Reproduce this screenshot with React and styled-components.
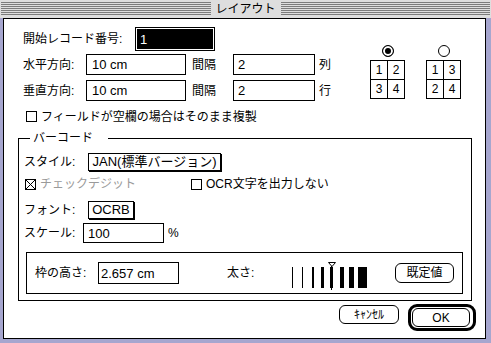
import React from "react";
import styled, { createGlobalStyle } from "styled-components";

const GlobalStyle = createGlobalStyle`
  html, body { margin: 0; padding: 0; background: #fff; }
  body {
    font-family: "Liberation Sans", "Noto Sans CJK JP", sans-serif;
    font-size: 12px;
    color: #000;
  }
  * { box-sizing: border-box; }
`;

const Window = styled.div`
    width: 491px;
    height: 343px;
    background: #a6a6cf;
    display: flex;
    flex-direction: column;
`;

const TitleBar = styled.div`
    height: 18px;
    flex: none;
    background: #dedede;
    display: flex;
    align-items: flex-start;
    padding: 2px 1px 0 1px;
`;

const Stripes = styled.div`
    flex: 1;
    height: 13px;
    background: repeating-linear-gradient(to bottom, #7c7c7c 0 1px, #dedede 1px 2px);
`;

const Title = styled.div`
    padding: 0 5px;
    line-height: 14px;
    background: #dedede;
`;

const Body = styled.div`
    flex: 1;
    margin: 0 5px 4px 3px;
    background: #fff;
    border: 1px solid #000;
    display: flex;
    flex-direction: column;
`;

const Top = styled.div`
    display: flex;
    padding: 8px 0 0 19px;
`;

const LeftCol = styled.div`
    width: 347px;
    display: flex;
    flex-direction: column;
`;

const Row = styled.div`
    display: flex;
    align-items: center;
    height: ${p => p.h || 21}px;
    margin-top: ${p => p.mt || 0}px;
    margin-left: ${p => p.ml || 0}px;
`;

const Label = styled.span`
    width: ${p => (p.w ? p.w + "px" : "auto")};
    margin-left: ${p => p.ml || 0}px;
    flex: none;
    line-height: 14px;
    white-space: nowrap;
    color: ${p => (p.disabled ? "#9a9a9a" : "#000")};
`;

const Field = styled.div`
    width: ${p => p.w}px;
    height: ${p => p.h || 21}px;
    margin-left: ${p => p.ml || 0}px;
    border: 1px solid #000;
    padding-left: ${p => (p.pad === undefined ? 4 : p.pad)}px;
    display: flex;
    align-items: center;
    font-size: 13px;
    flex: none;
`;

const SelectedField = styled.div`
    width: 80px;
    height: 24px;
    border: 1px solid #000;
    padding: 1px;
    flex: none;
`;

const Selection = styled.div`
    height: 100%;
    background: #000;
    color: #fff;
    font-size: 13px;
    padding-left: 3px;
    display: flex;
    align-items: center;
`;

const Box = styled.span`
    width: 11px;
    height: 11px;
    border: 1px solid #000;
    flex: none;
    display: inline-flex;
    margin-left: ${p => p.ml || 0}px;
    margin-right: 4px;
`;

const RightCol = styled.div`
    display: flex;
    gap: 21px;
    margin-top: 18px;
`;

const Option = styled.div`
    display: flex;
    flex-direction: column;
    align-items: center;
    gap: 3px;
`;

const Radio = styled.span`
    width: 12px;
    height: 12px;
    border: 1px solid #000;
    border-radius: 50%;
    background: ${p => (p.checked ? "#000" : "#fff")};
    box-shadow: inset 0 0 0 2px #fff;
`;

const Grid = styled.div`
    display: grid;
    grid-template-columns: 16px 16px;
    grid-template-rows: 18px 18px;
    gap: 1px;
    padding: 1px;
    background: #000;
`;

const Cell = styled.div`
    background: #fff;
    display: flex;
    align-items: center;
    justify-content: center;
    font-size: 12px;
`;

const Group = styled.fieldset`
    margin: 8px 0 0 14px;
    width: 454px;
    border: 1px solid #000;
    padding: 0 0 6px 5px;
    min-width: 0;
`;

const Legend = styled.legend`
    margin-left: 6px;
    padding: 0 15px 0 3px;
    line-height: 14px;
`;

const PopButton = styled.div`
    width: ${p => p.w}px;
    height: 18px;
    border: 1px solid #000;
    box-shadow: 1px 1px 0 #000;
    display: flex;
    align-items: center;
    justify-content: center;
    font-size: 13px;
    line-height: 14px;
    flex: none;
`;

const InnerBox = styled.div`
    margin: 9px 0 0 2px;
    width: 437px;
    height: 42px;
    border: 1px solid #000;
    display: flex;
    align-items: center;
    padding-left: 8px;
`;

const RoundButton = styled.div`
    width: ${p => p.w}px;
    height: ${p => p.h}px;
    margin-left: ${p => p.ml || 0}px;
    margin-top: ${p => p.mt || 0}px;
    border: 1px solid #000;
    border-radius: 6px;
    display: flex;
    align-items: center;
    justify-content: center;
    line-height: 14px;
    flex: none;
    background: #fff;
`;

const DefaultRing = styled.div`
    width: 68px;
    height: 27px;
    border: 3px solid #000;
    border-radius: 9px;
    padding: 1px;
    display: flex;
`;

const Footer = styled.div`
    display: flex;
    justify-content: flex-end;
    align-items: flex-start;
    gap: 9px;
    margin: 3px 9px 0 0;
`;

const Meter = styled.svg`
    flex: none;
    align-self: flex-start;
    margin-top: 8px;
`;

function Check({ checked, ml }) {
    return (
        <Box ml={ml}>
            {checked && (
                <svg width="9" height="9" viewBox="0 0 9 9">
                    <path d="M0 0L9 9M9 0L0 9" stroke="#000" strokeWidth="1" />
                </svg>
            )}
        </Box>
    );
}

const bars = [
    [2, 1], [12, 1], [22, 2], [31, 3], [40, 3], [50, 4], [59, 5], [68, 9],
];

function WeightMeter() {
    return (
        <Meter width="80" height="30" viewBox="0 0 80 30">
            {bars.map(([x, w]) => (
                <rect key={x} x={x} y="6" width={w} height="21" fill="#000" />
            ))}
            <path d="M38.5 1.5H45.5M38.5 1.5L42 5.5L45.5 1.5" stroke="#000" strokeWidth="1" fill="none" />
            <rect x="41" y="5" width="1" height="24" fill="#000" />
        </Meter>
    );
}

export default function App() {
    return (
        <>
            <GlobalStyle />
            <Window>
                <TitleBar>
                    <Stripes />
                    <Title>レイアウト</Title>
                    <Stripes />
                </TitleBar>
                <Body>
                    <Top>
                        <LeftCol>
                            <Row h={24}>
                                <Label w={112}>開始レコード番号:</Label>
                                <SelectedField>
                                    <Selection>1</Selection>
                                </SelectedField>
                            </Row>
                            <Row mt={3}>
                                <Label w={63}>水平方向:</Label>
                                <Field w={100} pad={5}>10 cm</Field>
                                <Label ml={6}>間隔</Label>
                                <Field w={82} ml={17}>2</Field>
                                <Label ml={4}>列</Label>
                            </Row>
                            <Row mt={5}>
                                <Label w={63}>垂直方向:</Label>
                                <Field w={100} pad={5}>10 cm</Field>
                                <Label ml={6}>間隔</Label>
                                <Field w={82} ml={17}>2</Field>
                                <Label ml={4}>行</Label>
                            </Row>
                            <Row h={13} mt={9} ml={3}>
                                <Check />
                                <Label>フィールドが空欄の場合はそのまま複製</Label>
                            </Row>
                        </LeftCol>
                        <RightCol>
                            <Option>
                                <Radio checked />
                                <Grid>
                                    <Cell>1</Cell><Cell>2</Cell><Cell>3</Cell><Cell>4</Cell>
                                </Grid>
                            </Option>
                            <Option>
                                <Radio />
                                <Grid>
                                    <Cell>1</Cell><Cell>3</Cell><Cell>2</Cell><Cell>4</Cell>
                                </Grid>
                            </Option>
                        </RightCol>
                    </Top>
                    <Group>
                        <Legend>バーコード</Legend>
                        <Row h={19} mt={7}>
                            <Label w={64}>スタイル:</Label>
                            <PopButton w={133}>JAN(標準バージョン)</PopButton>
                        </Row>
                        <Row h={12} mt={7} ml={1}>
                            <Check checked />
                            <Label w={151} disabled>チェックデジット</Label>
                            <Check />
                            <Label>OCR文字を出力しない</Label>
                        </Row>
                        <Row h={19} mt={10}>
                            <Label w={64}>フォント:</Label>
                            <PopButton w={46}>OCRB</PopButton>
                        </Row>
                        <Row h={20} mt={4}>
                            <Label w={59}>スケール:</Label>
                            <Field w={81} h={20}>100</Field>
                            <Label ml={4}>%</Label>
                        </Row>
                        <InnerBox>
                            <Label w={63}>枠の高さ:</Label>
                            <Field w={81} h={22} pad={2}>2.657 cm</Field>
                            <Label w={63} ml={48}>太さ:</Label>
                            <WeightMeter />
                            <RoundButton w={59} h={20} ml={25}>既定値</RoundButton>
                        </InnerBox>
                    </Group>
                    <Footer>
                        <RoundButton w={60} h={19} mt={1}>ｷｬﾝｾﾙ</RoundButton>
                        <DefaultRing>
                            <RoundButton w={58} h={19}>OK</RoundButton>
                        </DefaultRing>
                    </Footer>
                </Body>
            </Window>
        </>
    );
}
